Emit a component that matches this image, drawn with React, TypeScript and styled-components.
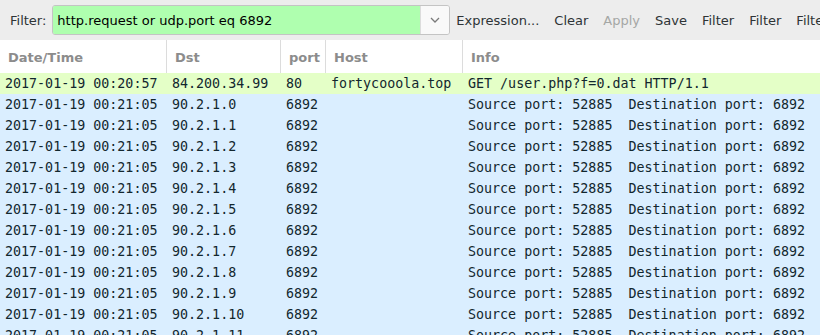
import React from 'react'
import styled, { createGlobalStyle } from 'styled-components'

const GlobalStyle = createGlobalStyle`
  html, body {
    margin: 0;
    padding: 0;
    background: #ffffff;
    overflow: hidden;
  }
`

type Packet = {
  time: string
  dst: string
  port: string
  host: string
  info: string
  kind: 'http' | 'udp'
}

const columns = [
  { title: 'Date/Time', width: 167 },
  { title: 'Dst', width: 114 },
  { title: 'port', width: 45 },
  { title: 'Host', width: 137 },
  { title: 'Info', width: 0 },
]

const udpInfo = 'Source port: 52885  Destination port: 6892'

const packets: Packet[] = [
  {
    time: '2017-01-19 00:20:57',
    dst: '84.200.34.99',
    port: '80',
    host: 'fortycooola.top',
    info: 'GET /user.php?f=0.dat HTTP/1.1',
    kind: 'http',
  },
  ...Array.from({ length: 12 }, (_, i) => ({
    time: '2017-01-19 00:21:05',
    dst: `90.2.1.${i}`,
    port: '6892',
    host: '',
    info: udpInfo,
    kind: 'udp' as const,
  })),
]

function App() {
  return (
    <Window>
      <GlobalStyle />
      <FilterBar>
        <FilterLabel>Filter:</FilterLabel>
        <FilterCombo>
          <FilterInput>http.request or udp.port eq 6892</FilterInput>
          <ComboButton>
            <svg width="10" height="6" viewBox="0 0 10 6">
              <path d="M1 1 L5 5 L9 1" fill="none" stroke="#7a7a7a" strokeWidth="1.3" />
            </svg>
          </ComboButton>
        </FilterCombo>
        <BarButton>Expression...</BarButton>
        <BarButton>Clear</BarButton>
        <BarButton disabled>Apply</BarButton>
        <BarButton>Save</BarButton>
        <BarButton>Filter</BarButton>
        <BarButton>Filter</BarButton>
        <BarButton>Filter</BarButton>
      </FilterBar>

      <PacketList>
        <HeaderRow>
          {columns.map((c) => (
            <HeaderCell key={c.title} $width={c.width}>
              {c.title}
            </HeaderCell>
          ))}
        </HeaderRow>
        {packets.map((p, i) => (
          <PacketRow key={i} $kind={p.kind}>
            <Cell $width={columns[0].width}>{p.time}</Cell>
            <Cell $width={columns[1].width}>{p.dst}</Cell>
            <Cell $width={columns[2].width}>{p.port}</Cell>
            <Cell $width={columns[3].width}>{p.host}</Cell>
            <Cell $width={0}>{p.info}</Cell>
          </PacketRow>
        ))}
      </PacketList>
    </Window>
  )
}

export default App

const Window = styled.div`
  width: 820px;
  height: 335px;
  overflow: hidden;
  display: flex;
  flex-direction: column;
  font-family: 'DejaVu Sans', 'Liberation Sans', sans-serif;
  font-size: 13px;
`

const FilterBar = styled.div`
  height: 40px;
  flex: none;
  display: flex;
  align-items: center;
  background: #ededed;
  padding-left: 10px;
  white-space: nowrap;
  overflow: hidden;
`

const FilterLabel = styled.span`
  color: #2e3436;
  margin-right: 6px;
`

const FilterCombo = styled.div`
  width: 398px;
  height: 30px;
  flex: none;
  box-sizing: border-box;
  display: flex;
  border: 1px solid #c4c4c4;
  border-radius: 3px;
  overflow: hidden;
  margin-right: 6px;
`

const FilterInput = styled.div`
  flex: 1;
  background: #afffaf;
  color: #000000;
  display: flex;
  align-items: center;
  padding-left: 4px;
`

const ComboButton = styled.div`
  width: 28px;
  flex: none;
  display: flex;
  align-items: center;
  justify-content: center;
  background: #f9f9f9;
  border-left: 1px solid #dcdcdc;
`

const BarButton = styled.span<{ disabled?: boolean }>`
  flex: none;
  color: ${(p) => (p.disabled ? '#a5a7a5' : '#2e3436')};
  margin-right: 15px;
`

const PacketList = styled.div`
  flex: 1;
  display: flex;
  flex-direction: column;
  background: #ffffff;
`

const HeaderRow = styled.div`
  height: 33px;
  flex: none;
  display: flex;
  align-items: stretch;
`

const HeaderCell = styled.div<{ $width: number }>`
  ${(p) => (p.$width ? `width: ${p.$width}px; flex: none;` : 'flex: 1;')}
  box-sizing: border-box;
  display: flex;
  align-items: center;
  padding-left: 8px;
  padding-top: 1px;
  color: #8c8c8c;
  font-weight: bold;
  border-right: ${(p) => (p.$width ? '1px solid #dcdcdc' : 'none')};
`

const PacketRow = styled.div<{ $kind: 'http' | 'udp' }>`
  height: 21px;
  flex: none;
  display: flex;
  align-items: center;
  background: ${(p) => (p.$kind === 'http' ? '#e4ffc7' : '#daeeff')};
  color: #12272e;
  font-family: 'DejaVu Sans Mono', 'Liberation Mono', monospace;
  font-size: 13.33px;
  white-space: pre;
`

const Cell = styled.div<{ $width: number }>`
  ${(p) => (p.$width ? `width: ${p.$width}px; flex: none;` : 'flex: 1;')}
  box-sizing: border-box;
  padding-left: 5px;
  overflow: hidden;
`
